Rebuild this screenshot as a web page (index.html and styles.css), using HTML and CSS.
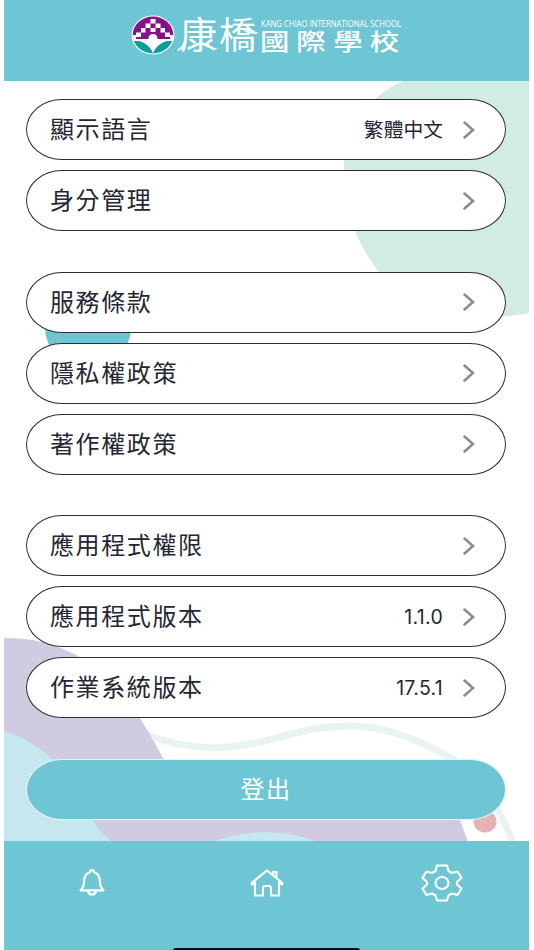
FILE: index.html
```html
<!DOCTYPE html>
<html lang="zh-Hant">
    <head>
        <meta charset="utf-8" />
        <title>設定</title>
        <link rel="stylesheet" href="styles.css">
    </head>
    <body>
        <div class="screen">
            <svg class="backdrop" viewBox="4 0 525 950" aria-hidden="true">
                <path fill="#d2ebe3" d="M402 81C366 99 344 128 344 168C344 208 355 240 378 271C406 309 455 326 529 313V81Z"/>
                <ellipse fill="#6ec5d4" cx="88" cy="328" rx="43" ry="40"/>
                <path fill="none" stroke="#e9f4f0" stroke-width="7" d="M140 733C190 751 224 751 264 741S320 726 352 726C395 727 430 746 456 761C482 782 502 811 514 845"/>
                <path fill="#d0cbe0" d="M4 638C30 638 52 642 78 656C106 670 125 692 140 718C149 733 157 746 163 758C200 775 300 770 380 775C425 778 445 795 460 820L468 842H4Z"/>
                <path fill="#c5e7ed" d="M4 731C22 736 38 746 51 758C74 778 79 794 93 820Q100 833 112 842H4Z"/>
                <path fill="#c5e7ed" d="M211 842Q268 822 317 842Z"/>
                <ellipse fill="#e5b3b7" cx="485" cy="821.5" rx="11.5" ry="11"/>
            </svg>

            <header class="header">
                <svg class="logo" viewBox="0 0 274 44" role="img" aria-label="康橋國際學校">
                    <clipPath id="badge">
                        <ellipse cx="22" cy="22" rx="20.3" ry="18.4"/>
                    </clipPath>
                    <ellipse cx="22" cy="22" rx="21.5" ry="19.6" fill="#fff"/>
                    <g clip-path="url(#badge)">
                        <path fill="#87108b" d="M0 0H44V26H0Z"/>
                        <path fill="#109d9d" d="M0 28H44V44H0Z"/>
                        <path fill="#fff" d="M19.5 6h5v4.5h-5zM14.5 10.5h5V15h-5zM24.5 10.5h5V15h-5zM10 15h4.5v4.500H10zM19.5 15h5v4h-5zM29.5 15H34v4.500h-4.500zM5 19.500h5V24H5zM34 19.500h5V24h-5zM0 22h5v4H0zM39 22h5v4h-5z"/>
                        <circle cx="22" cy="25.500" r="4.500" fill="#fff"/>
                        <path fill="#fff" d="M3 27H41Q26 29 22 40.500Q18 29 3 27Z"/>
                    </g>
                    <g class="logo-text">
                        <text class="logo-name" x="49" y="35.500" textLength="76">康橋</text>
                        <text class="logo-english" x="130" y="14" textLength="140" lengthAdjust="spacingAndGlyphs">KANG CHIAO INTERNATIONAL SCHOOL</text>
                        <text class="logo-school" transform="translate(129 36.500) scale(1.280 1)" x="0 28.300 57.200 85.800" y="0">國際學校</text>
                    </g>
                    <path class="logo-tail" d="M54 28Q52 35 47 37M76 30Q80 36 85 36M112 16Q118 21 126 20"/>
                </svg>
            </header>

            <main class="settings">
                <section class="group">
                    <a class="row">
                        <span class="label">顯示語言</span>
                        <span class="value value-text">繁體中文</span>
                        <svg class="chevron" viewBox="0 0 12 18"><path d="M1.500 1.500 10 9 1.500 16.500"/></svg>
                    </a>
                    <a class="row">
                        <span class="label">身分管理</span>
                        <svg class="chevron" viewBox="0 0 12 18"><path d="M1.500 1.500 10 9 1.500 16.500"/></svg>
                    </a>
                </section>

                <section class="group">
                    <a class="row">
                        <span class="label">服務條款</span>
                        <svg class="chevron" viewBox="0 0 12 18"><path d="M1.500 1.500 10 9 1.500 16.500"/></svg>
                    </a>
                    <a class="row">
                        <span class="label">隱私權政策</span>
                        <svg class="chevron" viewBox="0 0 12 18"><path d="M1.500 1.500 10 9 1.500 16.500"/></svg>
                    </a>
                    <a class="row">
                        <span class="label">著作權政策</span>
                        <svg class="chevron" viewBox="0 0 12 18"><path d="M1.500 1.500 10 9 1.500 16.500"/></svg>
                    </a>
                </section>

                <section class="group">
                    <a class="row">
                        <span class="label">應用程式權限</span>
                        <svg class="chevron" viewBox="0 0 12 18"><path d="M1.500 1.500 10 9 1.500 16.500"/></svg>
                    </a>
                    <a class="row">
                        <span class="label">應用程式版本</span>
                        <span class="value">1.1.0</span>
                        <svg class="chevron" viewBox="0 0 12 18"><path d="M1.500 1.500 10 9 1.500 16.500"/></svg>
                    </a>
                    <a class="row">
                        <span class="label">作業系統版本</span>
                        <span class="value">17.5.1</span>
                        <svg class="chevron" viewBox="0 0 12 18"><path d="M1.500 1.500 10 9 1.500 16.500"/></svg>
                    </a>
                </section>

                <button class="logout">登出</button>
            </main>

            <nav class="tabs">
                <a class="tab">
                    <svg width="26" height="28" viewBox="0 0 26 28">
                        <path d="M11 3.200Q11 1.200 13 1.200T15 3.200Q20.500 5 20.800 11C21 17 22 18.500 24.500 21.300H1.500C4 18.500 5 17 5.200 11Q5.500 5 11 3.200ZM9 21.500Q9.500 25.500 13 25.500T17 21.500"/>
                    </svg>
                </a>
                <a class="tab">
                    <svg width="34" height="28" viewBox="0 0 34 28">
                        <path d="M5 13.500 2 15.500 1.500 14 17 1.500 32.500 14 32 15.500 29 13.500V26.500H21V19.500Q21 17 19 17H15Q13 17 13 19.500V26.500H5ZM23 6V3H26.500V9"/>
                    </svg>
                </a>
                <a class="tab">
                    <svg width="42" height="38" viewBox="0 0 42 38">
                        <path d="M16 1.500H26L27.500 7 31 9 36.500 7.500 40.500 14 36 18V20.500L40.500 24.500 36.500 31 31 29.500 27.500 31.500 26 36.500H16L14.500 31.500 11 29.500 5.500 31 1.500 24.500 6 20.500V18L1.500 14 5.500 7.500 11 9 14.500 7Z"/>
                        <ellipse cx="21" cy="19" rx="6.500" ry="6"/>
                    </svg>
                </a>
            </nav>
            <div class="home-indicator"></div>
        </div>
    </body>
</html>
```

FILE: styles.css
```css
body {
    margin: 0;
    background-color: #fff;
    font-family: 'Noto Sans CJK TC', sans-serif;
    color: #242634;
}
.screen {
    position: relative;
    display: flex;
    flex-direction: column;
    width: 525px;
    height: 950px;
    margin-left: 4px;
    overflow: hidden;
}
.backdrop {
    position: absolute;
    top: 0;
    left: 0;
    width: 525px;
    height: 950px;
    z-index: -1;
}
.header {
    box-sizing: border-box;
    height: 81px;
    padding: 13px 0 0 127px;
    background-color: #6ec5d4;
}
.logo {
    display: block;
    width: 274px;
    height: 44px;
    overflow: visible;
}
.logo-text {
    fill: #fff;
}
.logo-name {
    font-size: 37px;
}
.logo-english {
    font-family: 'Open Sans', sans-serif;
    font-size: 9.5px;
    font-weight: 500;
}
.logo-school {
    font-size: 23px;
    font-weight: 500;
}
.logo-tail {
    fill: none;
    stroke: #fff;
    stroke-width: 1.5;
    stroke-linecap: round;
}
.settings {
    box-sizing: border-box;
    display: flex;
    flex-direction: column;
    gap: 40.5px;
    height: 760px;
    padding: 18px 23px 0 22px;
}
.group {
    display: flex;
    flex-direction: column;
    gap: 10px;
}
.row {
    box-sizing: border-box;
    display: flex;
    align-items: center;
    height: 61px;
    padding: 0 30px 0 23px;
    border: 1.5px solid #2c2d38;
    border-radius: 36px / 30.5px;
    background-color: #fff;
}
.label {
    flex: 1;
    padding-bottom: 3px;
    font-size: 24px;
    line-height: 32px;
    letter-spacing: 1.6px;
}
.value {
    margin-right: 20px;
    font-family: 'Inter', 'Noto Sans CJK TC', sans-serif;
    font-size: 19.5px;
    line-height: 28px;
    letter-spacing: 0.3px;
}
.value-text {
    font-size: 19.8px;
    letter-spacing: 0;
}
.chevron {
    width: 12px;
    height: 18px;
    fill: none;
    stroke: #8b8b90;
    stroke-width: 2.5;
    stroke-linecap: round;
}
.logout {
    box-sizing: border-box;
    height: 61px;
    padding: 0 0 3px;
    border: 1.5px solid #e4f5f8;
    border-radius: 36px / 30.5px;
    background-color: #6ec5d4;
    color: #fff;
    font-family: inherit;
    font-size: 24px;
    letter-spacing: 1.6px;
}
.tabs {
    box-sizing: border-box;
    display: grid;
    grid-template-columns: repeat(3, 1fr);
    justify-items: center;
    align-items: center;
    height: 109px;
    padding-bottom: 25px;
    background-color: #6ec5d4;
}
.tab {
    display: flex;
}
.tab svg {
    fill: none;
    stroke: #fff;
    stroke-width: 2.2;
    stroke-linejoin: round;
    stroke-linecap: round;
}
.home-indicator {
    position: absolute;
    bottom: -3px;
    left: 169px;
    width: 187px;
    height: 5px;
    border-radius: 3px;
    background-color: #06141a;
}
```
